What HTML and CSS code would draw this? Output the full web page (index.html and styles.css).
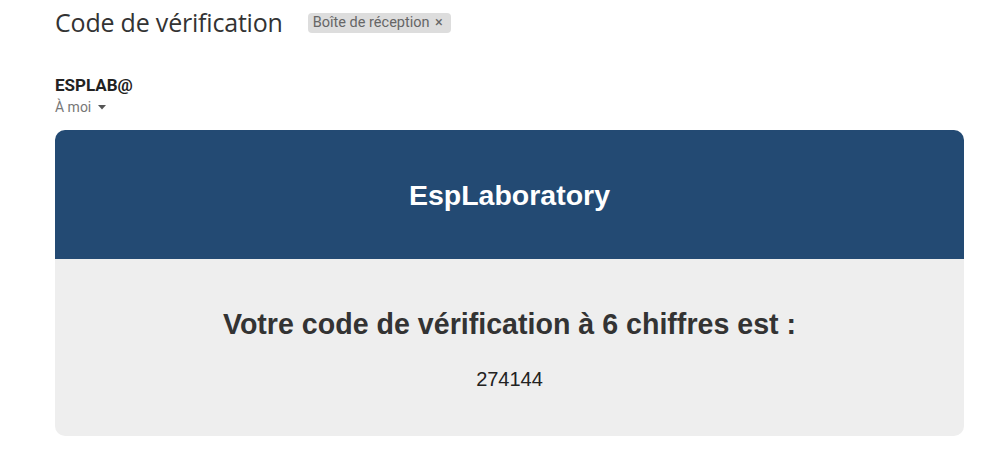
FILE: index.html
```html
<!DOCTYPE html>
<html lang="fr">
<head>
<meta charset="utf-8">
<link rel="stylesheet" href="styles.css">
</head>
<body>
<div class="page">
  <div class="subject-row">
    <h1 class="subject">Code de vérification</h1>
    <span class="label">Boîte de réception <span class="x">×</span></span>
  </div>
  <div class="sender">
    <div class="from">ESPLAB@</div>
    <div class="to">À moi <svg class="caret" width="8" height="5" viewBox="0 0 8 5"><path d="M0 0h8L4 4.5z" fill="#555"/></svg></div>
  </div>
  <div class="card">
    <div class="card-head">EspLaboratory</div>
    <div class="card-body">
      <h2 class="msg">Votre code de vérification à 6 chiffres est :</h2>
      <p class="code">274144</p>
    </div>
  </div>
</div>
</body>
</html>
```
FILE: styles.css
```css
html, body { margin: 0; padding: 0; background: #fff; }
body { font-family: "Roboto", "Liberation Sans", Arial, sans-serif; }
.page { padding: 5px 36px 0 55px; }
.subject-row { display: flex; align-items: center; gap: 25px; height: 34px; }
.subject { margin: 0; font-family: "Open Sans", "Roboto", sans-serif; font-weight: 400; font-size: 25px; color: #333; letter-spacing: -0.2px; }
.label { background: #dddddd; color: #666; font-size: 14.5px; line-height: 20px; padding: 0 8px 0 5px; border-radius: 4px; margin-top: 2px; }
.label .x { margin-left: 2px; }
.sender { margin-top: 36px; }
.from { font-weight: 700; font-size: 17px; line-height: 20px; color: #222; font-family: "Roboto", sans-serif; }
.to { font-size: 14px; line-height: 18px; color: #777; margin-top: 3px; display: flex; align-items: center; gap: 7px; }
.card { margin-top: 14px; border-radius: 10px; overflow: hidden; width: 909px; font-family: "Liberation Sans", Arial, sans-serif; }
.card-head { background: #234a73; color: #fff; font-weight: 700; font-size: 28.5px; height: 129px; display: flex; align-items: center; justify-content: center; padding-top: 2px; box-sizing: border-box; }
.card-body { background: #eeeeee; height: 177px; text-align: center; padding-top: 1px; box-sizing: border-box; }
.msg { margin: 47px 0 0; font-size: 28.6px; line-height: 34px; font-weight: 700; color: #333; }
.code { margin: 27px 0 0; font-size: 20px; color: #222; }
```
